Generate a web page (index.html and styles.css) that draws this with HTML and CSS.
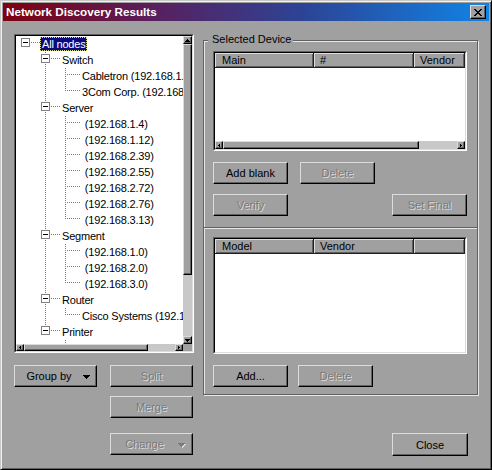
FILE: index.html
```html
<!DOCTYPE html>
<html>
<head>
<meta charset="utf-8">
<title>Network Discovery Results</title>
<link rel="stylesheet" href="styles.css">
</head>
<body>
<div class="window">
  <div class="titlebar">
    <span class="title">Network Discovery Results</span>
    <div class="close">
      <svg width="8" height="7" viewBox="0 0 8 7"><path d="M0 0h2v1H0zM6 0h2v1H6zM1 1h2v1H1zM5 1h2v1H5zM2 2h4v1H2zM3 3h2v1H3zM2 4h4v1H2zM1 5h2v1H1zM5 5h2v1H5zM0 6h2v1H0zM6 6h2v1H6z" fill="#000"/></svg>
    </div>
  </div>
  <div class="content">
    <div class="left">
      <div class="sunken tree">
        <div class="sunken-in tree-grid">
          <div class="tree-content">
            <div class="row"><span class="cell node c-h"><span class="box"></span></span><span class="label sel">All nodes</span></div>
            <div class="row"><span class="cell"></span><span class="cell node c-t"><span class="box"></span></span><span class="label">Switch</span></div>
            <div class="row"><span class="cell"></span><span class="cell c-v"></span><span class="cell node c-t"></span><span class="label">Cabletron (192.168.1.1)</span></div>
            <div class="row"><span class="cell"></span><span class="cell c-v"></span><span class="cell node c-l"></span><span class="label">3Com Corp. (192.168.1.2)</span></div>
            <div class="row"><span class="cell"></span><span class="cell node c-t"><span class="box"></span></span><span class="label">Server</span></div>
            <div class="row"><span class="cell"></span><span class="cell c-v"></span><span class="cell node c-t"></span><span class="label"> (192.168.1.4)</span></div>
            <div class="row"><span class="cell"></span><span class="cell c-v"></span><span class="cell node c-t"></span><span class="label"> (192.168.1.12)</span></div>
            <div class="row"><span class="cell"></span><span class="cell c-v"></span><span class="cell node c-t"></span><span class="label"> (192.168.2.39)</span></div>
            <div class="row"><span class="cell"></span><span class="cell c-v"></span><span class="cell node c-t"></span><span class="label"> (192.168.2.55)</span></div>
            <div class="row"><span class="cell"></span><span class="cell c-v"></span><span class="cell node c-t"></span><span class="label"> (192.168.2.72)</span></div>
            <div class="row"><span class="cell"></span><span class="cell c-v"></span><span class="cell node c-t"></span><span class="label"> (192.168.2.76)</span></div>
            <div class="row"><span class="cell"></span><span class="cell c-v"></span><span class="cell node c-l"></span><span class="label"> (192.168.3.13)</span></div>
            <div class="row"><span class="cell"></span><span class="cell node c-t"><span class="box"></span></span><span class="label">Segment</span></div>
            <div class="row"><span class="cell"></span><span class="cell c-v"></span><span class="cell node c-t"></span><span class="label"> (192.168.1.0)</span></div>
            <div class="row"><span class="cell"></span><span class="cell c-v"></span><span class="cell node c-t"></span><span class="label"> (192.168.2.0)</span></div>
            <div class="row"><span class="cell"></span><span class="cell c-v"></span><span class="cell node c-l"></span><span class="label"> (192.168.3.0)</span></div>
            <div class="row"><span class="cell"></span><span class="cell node c-t"><span class="box"></span></span><span class="label">Router</span></div>
            <div class="row"><span class="cell"></span><span class="cell c-v"></span><span class="cell node c-l"></span><span class="label">Cisco Systems (192.168.1.254)</span></div>
            <div class="row"><span class="cell"></span><span class="cell node c-l"><span class="box"></span></span><span class="label">Printer</span></div>
            <div class="row"><span class="cell"></span><span class="cell"></span><span class="cell node c-l"></span><span class="label"> (192.168.1.25)</span></div>
          </div>
          <div class="vscroll">
            <div class="sb-btn"><svg width="5" height="3" viewBox="0 0 5 3"><path d="M2 0h1v1H2zM1 1h3v1H1zM0 2h5v1H0z"/></svg></div>
            <div class="thumb vthumb"></div>
            <div class="track"></div>
            <div class="sb-btn"><svg width="5" height="3" viewBox="0 0 5 3"><path d="M0 0h5v1H0zM1 1h3v1H1zM2 2h1v1H2z"/></svg></div>
          </div>
          <div class="hscroll">
            <div class="sb-btn"><svg width="2" height="3" viewBox="0 0 2 3"><path d="M1 0h1v3H1zM0 1h1v1H0z"/></svg></div>
            <div class="thumb tree-hthumb"></div>
            <div class="track"></div>
            <div class="sb-btn"><svg width="2" height="3" viewBox="0 0 2 3"><path d="M0 0h1v3H0zM1 1h1v1H1z"/></svg></div>
          </div>
          <div class="corner"></div>
        </div>
      </div>
      <div class="left-actions">
        <div class="btn btn-drop lbtn">
          <span class="btn-text">Group by</span>
          <svg class="drop" width="7" height="4" viewBox="0 0 7 4"><path d="M0 0h7v1H0zM1 1h5v1H1zM2 2h3v1H2zM3 3h1v1H3z" fill="#000"/></svg>
        </div>
        <div class="stack">
          <div class="btn dis lbtn">Split</div>
          <div class="btn dis lbtn">Merge</div>
          <div class="btn btn-drop dis lbtn change">
            <span class="btn-text">Change</span>
            <svg class="drop" width="8" height="5" viewBox="0 0 8 5"><path d="M1 1h7v1H1zM2 2h5v1H2zM3 3h3v1H3zM4 4h1v1H4z" fill="#dcdcdc"/><path d="M0 0h7v1H0zM1 1h5v1H1zM2 2h3v1H2zM3 3h1v1H3z" fill="#7a7a7a"/></svg>
          </div>
        </div>
      </div>
    </div>
    <div class="right">
      <div class="group">
        <div class="legend">Selected Device</div>
        <div class="sunken lv lv1">
          <div class="sunken-in lv-in">
            <div class="lv-head">
              <div class="hcell c1">Main</div>
              <div class="hcell c2">#</div>
              <div class="hcell c3">Vendor</div>
            </div>
            <div class="lv-body"></div>
            <div class="hscroll lv-hscroll">
              <div class="sb-btn"><svg width="2" height="3" viewBox="0 0 2 3"><path d="M1 0h1v3H1zM0 1h1v1H0z"/></svg></div>
              <div class="thumb lv-hthumb"></div>
              <div class="track"></div>
              <div class="sb-btn"><svg width="2" height="3" viewBox="0 0 2 3"><path d="M0 0h1v3H0zM1 1h1v1H1z"/></svg></div>
            </div>
          </div>
        </div>
        <div class="btn-row r1">
          <div class="btn">Add blank</div>
          <div class="btn dis">Delete</div>
        </div>
        <div class="btn-row r2">
          <div class="btn dis">Verify</div>
          <div class="btn dis">Set Final</div>
        </div>
        <div class="sep"></div>
        <div class="sunken lv lv2">
          <div class="sunken-in lv-in">
            <div class="lv-head">
              <div class="hcell c1">Model</div>
              <div class="hcell c2">Vendor</div>
              <div class="hcell c3"></div>
            </div>
            <div class="lv-body"></div>
          </div>
        </div>
        <div class="btn-row r3">
          <div class="btn">Add...</div>
          <div class="btn dis">Delete</div>
        </div>
      </div>
      <div class="close-row">
        <div class="btn close-btn">Close</div>
      </div>
    </div>
  </div>
</div>
</body>
</html>
```

FILE: styles.css
```css
* { box-sizing: border-box; }
html, body { margin: 0; padding: 0; }
body {
  font: 11px/13px "Liberation Sans", Arial, sans-serif;
  color: #000;
  background: #a0a0a0;
}

.window {
  width: 492px;
  height: 470px;
  overflow: hidden;
  border: 1px solid;
  border-color: #c8c8c8 #000 #000 #c8c8c8;
  padding: 2px;
  box-shadow: inset 1px 1px 0 #f2f2f2, inset -1px -1px 0 #606060;
  background: #a0a0a0;
}

.titlebar {
  height: 18px;
  display: flex;
  align-items: center;
  justify-content: space-between;
  padding: 0 3px;
  background: linear-gradient(to right, #80000e 0%, #5a1e5c 30%, #2c4496 62%, #1084e6 100%);
}
.title {
  color: #fff;
  font-weight: bold;
  font-size: 11.7px;
  line-height: 14px;
}
.close {
  width: 16px;
  height: 14px;
  display: flex;
  align-items: center;
  justify-content: center;
  background: #a0a0a0;
  border: 1px solid;
  border-color: #dcdcdc #000 #000 #dcdcdc;
  box-shadow: inset -1px -1px 0 #606060;
}
.close svg { display: block; margin-left: -1px; }

.content {
  display: grid;
  grid-template-columns: 180px 275px;
  column-gap: 9px;
  padding: 13px 0 0 11px;
  align-items: start;
}

/* sunken frames */
.sunken {
  border: 1px solid;
  border-color: #606060 #fff #fff #606060;
}
.sunken-in {
  border: 1px solid;
  border-color: #000 #dcdcdc #dcdcdc #000;
  height: 100%;
}

/* tree */
.tree { height: 319px; }
.tree-grid {
  display: grid;
  grid-template-columns: 167px 9px;
  grid-template-rows: 308px 7px;
  background: #fff;
}
.tree-content {
  overflow: hidden;
  background: #fff;
}
.row {
  display: flex;
  align-items: flex-start;
  height: 16px;
  white-space: nowrap;
}
.cell {
  display: block;
  flex: none;
  width: 20px;
  height: 16px;
}
.cell.node { width: 24px; }

.c-v {
  background: repeating-linear-gradient(to bottom, #7a7a7a 0 1px, transparent 1px 2px) 9px 0 / 1px 16px no-repeat;
}
.c-t {
  background:
    repeating-linear-gradient(to right, #7a7a7a 0 1px, transparent 1px 2px) 11px 6px / 13px 1px no-repeat,
    repeating-linear-gradient(to bottom, #7a7a7a 0 1px, transparent 1px 2px) 9px 0 / 1px 16px no-repeat;
}
.c-l {
  background:
    repeating-linear-gradient(to right, #7a7a7a 0 1px, transparent 1px 2px) 11px 6px / 13px 1px no-repeat,
    repeating-linear-gradient(to bottom, #7a7a7a 0 1px, transparent 1px 2px) 9px 0 / 1px 7px no-repeat;
}
.c-h {
  background: repeating-linear-gradient(to right, #7a7a7a 0 1px, transparent 1px 2px) 11px 6px / 13px 1px no-repeat;
}
.box {
  display: block;
  width: 9px;
  height: 9px;
  margin: 2px 0 0 5px;
  border: 1px solid #808080;
  background: linear-gradient(#000, #000) center / 5px 1px no-repeat, #fff;
}
.label {
  display: block;
  height: 14px;
  line-height: 14px;
  margin-top: 1px;
  padding: 0 2px;
  white-space: pre;
  letter-spacing: -0.2px;
}
.label.sel {
  background: #0a0a80;
  color: #fff;
  outline: 1px dotted #d8d890;
  outline-offset: -1px;
}

/* scrollbars */
.vscroll {
  display: flex;
  flex-direction: column;
  background: #c8c8c8;
}
.hscroll {
  display: flex;
  height: 8px;
  background: #c8c8c8;
}
.tree-grid .hscroll { height: 7px; }
.corner { background: #a0a0a0; }
.sb-btn {
  flex: none;
  width: 8px;
  height: 100%;
  display: flex;
  align-items: center;
  justify-content: center;
  background: #a0a0a0;
  border: 1px solid;
  border-color: #dcdcdc #000 #000 #dcdcdc;
  box-shadow: inset -1px -1px 0 #606060;
}
.vscroll .sb-btn { width: 9px; height: 8px; }
.sb-btn svg { display: block; fill: #000; }
.thumb {
  flex: none;
  background: #a0a0a0;
  border: 1px solid;
  border-color: #dcdcdc #000 #000 #dcdcdc;
  box-shadow: inset -1px -1px 0 #606060;
}
.vthumb { height: 231px; }
.tree-hthumb { width: 124px; }
.lv-hthumb { width: 196px; }
.track { flex: 1; background: #c8c8c8; }

/* buttons */
.btn {
  height: 22px;
  width: 75px;
  display: flex;
  align-items: center;
  justify-content: center;
  padding-top: 1px;
  background: #a0a0a0;
  border: 1px solid;
  border-color: #dcdcdc #000 #000 #dcdcdc;
  box-shadow: inset -1px -1px 0 #606060;
  white-space: nowrap;
}
.btn.dis {
  color: #7a7a7a;
  text-shadow: 1px 1px 0 #dcdcdc;
}
.lbtn { width: 83px; }
.btn-drop {
  justify-content: flex-start;
  padding-right: 6px;
}
.btn-drop .btn-text {
  flex: 1;
  text-align: center;
}
.drop { display: block; flex: none; margin-top: 1px; }

.left-actions {
  display: flex;
  gap: 13px;
  margin-top: 12px;
}
.stack {
  display: flex;
  flex-direction: column;
  gap: 9px;
}
.stack .change { margin-top: 6px; }

/* group box */
.group {
  margin-top: 6px;
  border: 1px solid #606060;
  box-shadow: inset 1px 1px 0 #e8e8e8, 1px 1px 0 #e8e8e8;
  padding: 0 10px 7px 9px;
}
.legend {
  width: max-content;
  margin: -8px 0 0 -5px;
  padding: 0 1px 0 4px;
  background: #a0a0a0;
  line-height: 13px;
  height: 13px;
}

/* list views */
.lv1 { height: 100px; margin-top: 5px; }
.lv2 { height: 117px; margin-top: 8px; }
.lv-in {
  display: flex;
  flex-direction: column;
  background: #fff;
}
.lv-head {
  display: flex;
  height: 15px;
  flex: none;
  background: #a0a0a0;
}
.hcell {
  height: 15px;
  line-height: 14px;
  padding-left: 6px;
  border-right: 1px solid #202020;
  border-bottom: 1px solid #202020;
  box-shadow: inset 1px 1px 0 #dcdcdc, inset -1px -1px 0 #606060;
  white-space: nowrap;
  overflow: hidden;
}
.hcell.c1 { width: 99px; padding-left: 7px; }
.hcell.c2 { width: 100px; }
.hcell.c3 { flex: 1; }
.lv-body { flex: 1; background: #fff; }
.lv-hscroll { flex: none; }

.btn-row { display: flex; }
.r1 { margin-top: 11px; gap: 12px; }
.r2 { margin-top: 10px; justify-content: space-between; }
.r3 { margin-top: 11px; gap: 10px; }

.sep {
  margin: 11px -10px 0 -9px;
  height: 2px;
  border-top: 1px solid #606060;
  border-bottom: 1px solid #e8e8e8;
}

.close-row {
  display: flex;
  justify-content: flex-end;
  margin-top: 38px;
  padding-right: 10px;
}
.close-btn { width: 76px; height: 23px; }
```
